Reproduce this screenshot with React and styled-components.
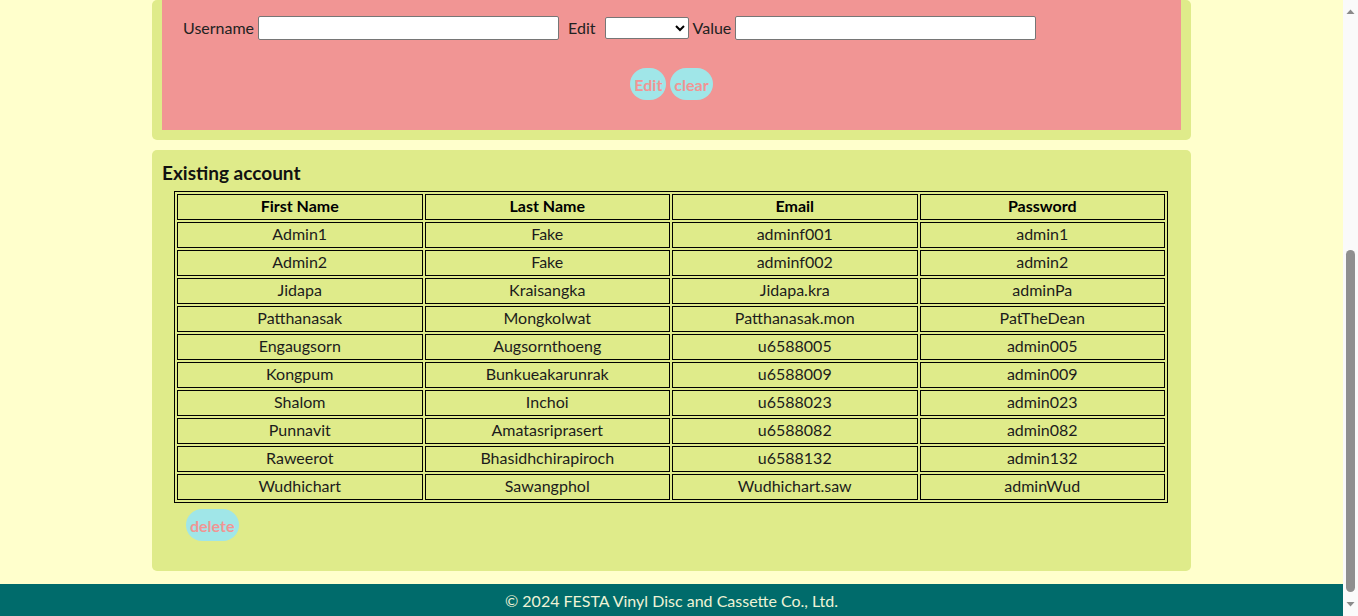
import React from 'react';
import styled, { createGlobalStyle } from 'styled-components';

const GlobalStyle = createGlobalStyle`
    html, body {
        margin: 0;
        padding: 0;
        background-color: #ffffcc;
        font-family: Lato, "Noto Sans", sans-serif;
        color: #1c1c1c;
        overflow: hidden;
    }
`

const Shell = styled.div`
    display: flex;
    height: 100vh;
`

const Page = styled.div`
    flex: 1;
    min-width: 0;
    display: flex;
    flex-direction: column;
    overflow: hidden;
`

const Main = styled.main`
    flex: 1;
    display: flex;
    flex-direction: column;
    gap: 10px;
    padding-bottom: 13px;
`

const Card = styled.section`
    width: 1039px;
    margin: 0 auto;
    box-sizing: border-box;
    background-color: #dfeb8a;
    border-radius: 5px;
    padding: ${props => props.$padding || '10px'};
`

const PinkPanel = styled.div`
    background-color: #f19594;
    padding: 16px 21px 30px;
`

const CardTitle = styled.h3`
    margin: 0 0 6px;
    font-size: 19px;
    line-height: 25px;
    font-weight: 700;
    color: #111;
`

const FormRow = styled.div`
    display: flex;
    align-items: center;
`

const Label = styled.label`
    font-size: 16px;
    line-height: 22px;
    color: #222;
    margin-left: ${props => props.$ml || '0px'};
    margin-right: ${props => props.$mr || '4px'};
`

const TextInput = styled.input`
    box-sizing: border-box;
    width: 301px;
    height: 24px;
    border: 1px solid #767676;
    border-radius: 2px;
    background: #fff;
    padding: 1px 2px;
    font-size: 14px;
`

const Select = styled.select`
    box-sizing: border-box;
    width: 84px;
    height: 22px;
    border: 1px solid #767676;
    border-radius: 2px;
    background: #fff;
    font-size: 13px;
    margin-right: 4px;
`

const ButtonRow = styled.div`
    display: flex;
    justify-content: center;
    gap: 4px;
    margin-top: 28px;
`

const PillButton = styled.button`
    height: 32px;
    padding: 0 4px;
    border: none;
    border-radius: 16px;
    background-color: #a0e6e8;
    color: #f19594;
    font-family: inherit;
    font-size: 16px;
    font-weight: 700;
    cursor: pointer;
`

const DeleteWrap = styled.div`
    margin: 6px 0 30px 24px;
`

const AccountTable = styled.table`
    width: 994px;
    margin-left: 12px;
    table-layout: fixed;
    border: 1px solid #000;
    border-spacing: 2px;
    font-size: 16px;
`

const HeadCell = styled.th`
    border: 1px solid #000;
    padding: 0 1px 2px;
    line-height: 22px;
    font-weight: 700;
    color: #000;
    text-align: center;
`

const Cell = styled.td`
    border: 1px solid #000;
    padding: 0 1px 2px;
    line-height: 22px;
    color: #1c1c1c;
    text-align: center;
`

const Footer = styled.footer`
    flex-shrink: 0;
    height: 32px;
    background-color: #006b6b;
    color: #eef3d6;
    display: flex;
    align-items: center;
    justify-content: center;
    font-size: 16px;
`

const ScrollTrack = styled.svg`
    flex-shrink: 0;
    width: 15px;
    height: 100%;
    display: block;
`

const accounts = [
    ['Admin1', 'Fake', 'adminf001', 'admin1'],
    ['Admin2', 'Fake', 'adminf002', 'admin2'],
    ['Jidapa', 'Kraisangka', 'Jidapa.kra', 'adminPa'],
    ['Patthanasak', 'Mongkolwat', 'Patthanasak.mon', 'PatTheDean'],
    ['Engaugsorn', 'Augsornthoeng', 'u6588005', 'admin005'],
    ['Kongpum', 'Bunkueakarunrak', 'u6588009', 'admin009'],
    ['Shalom', 'Inchoi', 'u6588023', 'admin023'],
    ['Punnavit', 'Amatasriprasert', 'u6588082', 'admin082'],
    ['Raweerot', 'Bhasidhchirapiroch', 'u6588132', 'admin132'],
    ['Wudhichart', 'Sawangphol', 'Wudhichart.saw', 'adminWud'],
]

// the page is scrolled to the bottom in the picture
function Scrollbar() {
    return (
        <ScrollTrack viewBox="0 0 15 616" preserveAspectRatio="none">
            <rect x="0" y="0" width="15" height="616" fill="#fafafa" />
            <polygon points="3.5,14 7.5,9.5 11.5,14" fill="#8a8a8a" />
            <rect x="3" y="250" width="9" height="342" rx="4.5" fill="#8f8f8f" />
            <polygon points="3.5,602 11.5,602 7.5,606.5" fill="#8a8a8a" />
        </ScrollTrack>
    )
}

export default function App() {
    return (
        <>
            <GlobalStyle />
            <Shell>
                <Page>
                    <Main>
                        <Card $padding="0 10px 10px">
                            <PinkPanel>
                                <FormRow>
                                    <Label>Username</Label>
                                    <TextInput />
                                    <Label $ml="9px" $mr="9px">Edit</Label>
                                    <Select>
                                        <option></option>
                                        <option>First Name</option>
                                        <option>Last Name</option>
                                        <option>Email</option>
                                        <option>Password</option>
                                    </Select>
                                    <Label>Value</Label>
                                    <TextInput />
                                </FormRow>
                                <ButtonRow>
                                    <PillButton>Edit</PillButton>
                                    <PillButton>clear</PillButton>
                                </ButtonRow>
                            </PinkPanel>
                        </Card>
                        <Card $padding="10px 10px 0">
                            <CardTitle>Existing account</CardTitle>
                            <AccountTable>
                                <thead>
                                    <tr>
                                        <HeadCell>First Name</HeadCell>
                                        <HeadCell>Last Name</HeadCell>
                                        <HeadCell>Email</HeadCell>
                                        <HeadCell>Password</HeadCell>
                                    </tr>
                                </thead>
                                <tbody>
                                    {accounts.map(row => (
                                        <tr key={row[2]}>
                                            {row.map((v, i) => <Cell key={i}>{v}</Cell>)}
                                        </tr>
                                    ))}
                                </tbody>
                            </AccountTable>
                            <DeleteWrap>
                                <PillButton>delete</PillButton>
                            </DeleteWrap>
                        </Card>
                    </Main>
                    <Footer>© 2024 FESTA Vinyl Disc and Cassette Co., Ltd.</Footer>
                </Page>
                <Scrollbar />
            </Shell>
        </>
    )
}
